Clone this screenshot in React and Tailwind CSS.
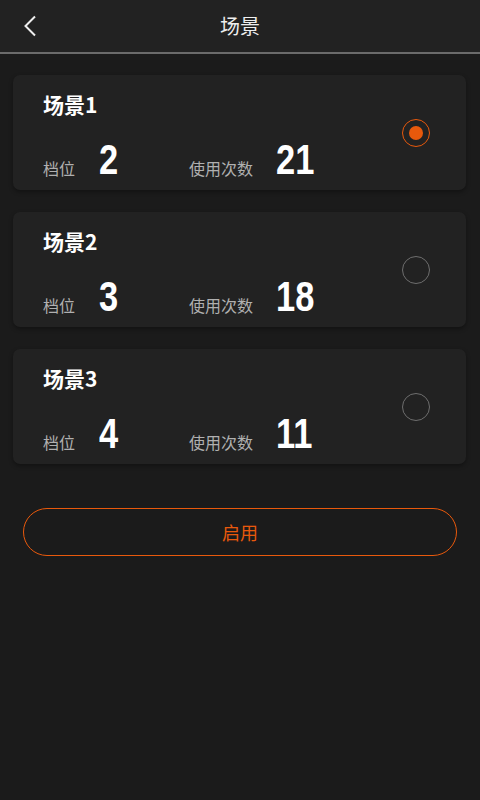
import { useState } from "react";

const scenes = [
    { id: 1, name: "场景1", gear: 2, count: 21 },
    { id: 2, name: "场景2", gear: 3, count: 18 },
    { id: 3, name: "场景3", gear: 4, count: 11 },
];

const cjk = { fontFamily: '"Noto Sans CJK SC", "Noto Sans", sans-serif' };
const narrow = { fontFamily: '"Liberation Sans", Arial, sans-serif' };

function Radio({ checked }) {

    return (
        <div
            className={
                checked
                    ? "w-[28px] h-[28px] rounded-full border-[1.5px] border-[#e8590c] flex items-center justify-center"
                    : "w-[28px] h-[28px] rounded-full border-[1.5px] border-[#6e6e6e]"
            }
        >
            {checked && <div className="w-[14px] h-[14px] rounded-full bg-[#e8590c]" />}
        </div>
    );

}

function Num({ value, width }) {

    return (
        <span className={width + " leading-[30px] h-[30px] flex items-end"}>
            <span className="inline-block text-[42px] font-bold leading-[30px] text-white scale-x-[0.82] origin-left" style={narrow}>
                {value}
            </span>
        </span>
    );

}

function App() {

    const [selected, setSelected] = useState(1);

    return (

        <div className="min-h-screen w-[480px] bg-[#1b1b1b] text-white" style={cjk}>

            <header className="h-[54px] bg-[#222222] border-b-2 border-[#6b6b6b] flex items-center relative">

                <button className="pl-[22px] pr-3 h-full flex items-center">
                    <svg width="16" height="22" viewBox="0 0 16 22" fill="none">
                        <path d="M13 1.5L3.5 11L13 20.5" stroke="#eeeeee" strokeWidth="2" />
                    </svg>
                </button>

                <h1 className="absolute left-1/2 -translate-x-1/2 text-[20px] text-[#eeeeee]">
                    场景
                </h1>

            </header>

            <div className="px-[13px] pt-[21px] flex flex-col gap-[22px]">

                {scenes.map((scene) => (

                    <div
                        key={scene.id}
                        onClick={() => setSelected(scene.id)}
                        className="w-[453px] h-[115px] bg-[#222222] rounded-[7px] shadow-[0_2px_4px_rgba(0,0,0,0.35)] flex items-center pl-[30px] pr-[36px]"
                    >

                        <div className="flex-1 flex flex-col h-full">

                            <div className="pt-[14px] text-[21px] font-bold leading-[30px] text-white">
                                {scene.name}
                            </div>

                            <div className="flex items-end mt-[26px]">

                                <span className="w-[56px] text-[16px] text-[#b0b0b0] leading-[20px] -mb-[3px]">档位</span>

                                <Num value={scene.gear} width="w-[90px]" />

                                <span className="w-[87px] text-[16px] text-[#b0b0b0] leading-[20px] -mb-[3px]">使用次数</span>

                                <Num value={scene.count} width="" />

                            </div>

                        </div>

                        <Radio checked={selected === scene.id} />

                    </div>

                ))}

                <button className="mt-[22px] mx-[10px] h-[48px] rounded-full border border-[#e8590c] text-[#e8590c] text-[18px]">
                    启用
                </button>

            </div>

        </div>

    );

}

export default App;
